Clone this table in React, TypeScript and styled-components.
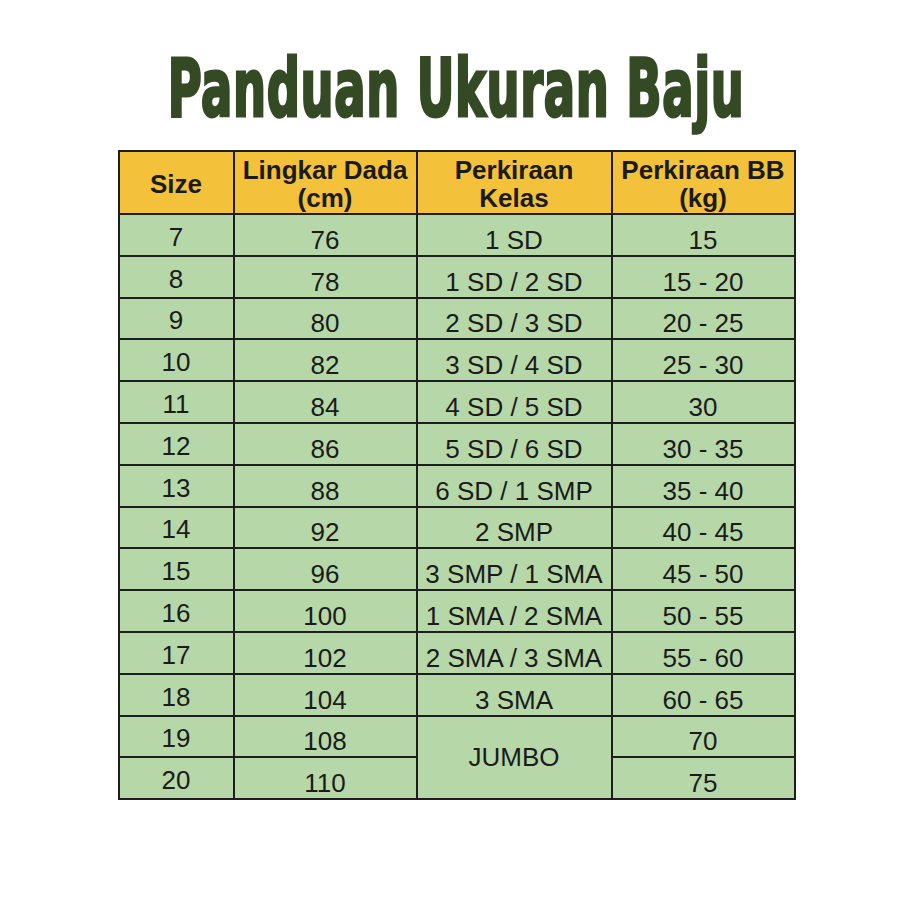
import styled, { createGlobalStyle } from "styled-components";

const GlobalStyle = createGlobalStyle`
    html, body {
        margin: 0;
        padding: 0;
        background: #ffffff;
    }
`;

type Row = {
    size: string;
    dada: string;
    kelas?: string;
    kelasSpan?: number;
    bb: string;
};

const rows: Row[] = [
    { size: "7", dada: "76", kelas: "1 SD", bb: "15" },
    { size: "8", dada: "78", kelas: "1 SD / 2 SD", bb: "15 - 20" },
    { size: "9", dada: "80", kelas: "2 SD / 3 SD", bb: "20 - 25" },
    { size: "10", dada: "82", kelas: "3 SD / 4 SD", bb: "25 - 30" },
    { size: "11", dada: "84", kelas: "4 SD / 5 SD", bb: "30" },
    { size: "12", dada: "86", kelas: "5 SD / 6 SD", bb: "30 - 35" },
    { size: "13", dada: "88", kelas: "6 SD / 1 SMP", bb: "35 - 40" },
    { size: "14", dada: "92", kelas: "2 SMP", bb: "40 - 45" },
    { size: "15", dada: "96", kelas: "3 SMP / 1 SMA", bb: "45 - 50" },
    { size: "16", dada: "100", kelas: "1 SMA / 2 SMA", bb: "50 - 55" },
    { size: "17", dada: "102", kelas: "2 SMA / 3 SMA", bb: "55 - 60" },
    { size: "18", dada: "104", kelas: "3 SMA", bb: "60 - 65" },
    { size: "19", dada: "108", kelas: "JUMBO", kelasSpan: 2, bb: "70" },
    { size: "20", dada: "110", bb: "75" },
];

const Page = styled.div`
    display: flex;
    flex-direction: column;
    align-items: center;
    padding-top: 41px;
`;

const Title = styled.h1`
    margin: 0 0 13px;
    font-family: "DejaVu Sans Condensed", "DejaVu Sans", sans-serif;
    font-weight: 700;
    font-size: 80px;
    line-height: 96px;
    letter-spacing: 1px;
    color: #344a25;
    -webkit-text-stroke: 3px #344a25;
    transform: scaleX(0.645);
    white-space: nowrap;
`;

const Table = styled.table`
    border-collapse: collapse;
    table-layout: fixed;
    width: 678px;
    font-family: "Liberation Sans", Arial, sans-serif;
    color: #1b1b1b;
`;

const HeadCell = styled.th`
    background: #f3c13a;
    border: 2px solid #1e1e1e;
    font-size: 26px;
    font-weight: 700;
    line-height: 28px;
    height: 59px;
    padding: 2px 2px 0;
    text-align: center;
    vertical-align: middle;
`;

const BodyRow = styled.tr`
    height: 41.8px;
`;

const Cell = styled.td<{ $lift?: boolean; $middle?: boolean }>`
    background: #b6d7a8;
    border: 2px solid #1e1e1e;
    font-size: 26px;
    line-height: 30px;
    padding: 0 0 ${(p) => (p.$lift ? "3px" : "0")};
    text-align: center;
    vertical-align: ${(p) => (p.$middle ? "middle" : "bottom")};
    white-space: nowrap;
`;

export default function App() {
    return (
        <>
            <GlobalStyle />
            <Page>
                <Title>Panduan Ukuran Baju</Title>
                <Table>
                    <colgroup>
                        <col style={{ width: 115 }} />
                        <col style={{ width: 183 }} />
                        <col style={{ width: 195 }} />
                        <col style={{ width: 183 }} />
                    </colgroup>
                    <thead>
                        <tr>
                            <HeadCell>Size</HeadCell>
                            <HeadCell>
                                Lingkar Dada
                                <br />
                                (cm)
                            </HeadCell>
                            <HeadCell>
                                Perkiraan
                                <br />
                                Kelas
                            </HeadCell>
                            <HeadCell>
                                Perkiraan BB
                                <br />
                                (kg)
                            </HeadCell>
                        </tr>
                    </thead>
                    <tbody>
                        {rows.map((r) => (
                            <BodyRow key={r.size}>
                                <Cell $lift>{r.size}</Cell>
                                <Cell>{r.dada}</Cell>
                                {r.kelas && (
                                    <Cell rowSpan={r.kelasSpan} $middle={!!r.kelasSpan}>
                                        {r.kelas}
                                    </Cell>
                                )}
                                <Cell>{r.bb}</Cell>
                            </BodyRow>
                        ))}
                    </tbody>
                </Table>
            </Page>
        </>
    );
}
